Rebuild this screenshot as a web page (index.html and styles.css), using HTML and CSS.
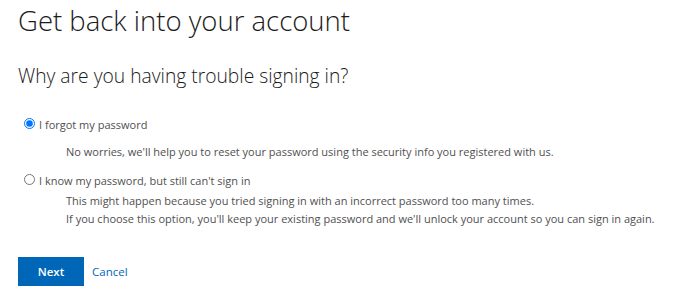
FILE: index.html
```html
<!DOCTYPE html>
<html lang="en">
<head>
<meta charset="utf-8">
<title>Get back into your account</title>
<link rel="stylesheet" href="styles.css">
</head>
<body>
<main class="page">
  <h1 class="title">Get back into your account</h1>
  <h2 class="subtitle">Why are you having trouble signing in?</h2>
  <form class="options">
    <div class="option">
      <label class="option-label"><input type="radio" name="reason" class="radio" checked><span>I forgot my password</span></label>
      <div class="option-desc">
        <p>No worries, we'll help you to reset your password using the security info you registered with us.</p>
      </div>
    </div>
    <div class="option option-second">
      <label class="option-label"><input type="radio" name="reason" class="radio"><span>I know my password, but still can't sign in</span></label>
      <div class="option-desc option-desc-tight">
        <p>This might happen because you tried signing in with an incorrect password too many times.</p>
        <p>If you choose this option, you'll keep your existing password and we'll unlock your account so you can sign in again.</p>
      </div>
    </div>
    <div class="actions">
      <button type="button" class="btn-primary">Next</button>
      <a href="#" class="link">Cancel</a>
    </div>
  </form>
</main>
</body>
</html>
```
FILE: styles.css
```css
html, body {
  margin: 0;
  padding: 0;
  background: #ffffff;
}
body {
  font-family: "Open Sans", "Noto Sans", sans-serif;
  color: #1b1b1b;
}
.page {
  padding: 0 18px;
}
.title {
  margin: 3px 0 0;
  font-size: 27.5px;
  line-height: 36px;
  font-weight: 300;
  color: #1b1b1b;
}
.subtitle {
  margin: 23px 0 0;
  font-size: 19.25px;
  line-height: 28px;
  font-weight: 300;
  color: #1b1b1b;
}
.options {
  margin-top: 25px;
}
.option-label {
  display: flex;
  align-items: flex-start;
  font-size: 11px;
  line-height: 20px;
  color: #505050;
}
.radio {
  margin: 3px 4px 0 6px;
  width: 11px;
  height: 11px;
  accent-color: #0075ff;
}
.option-desc {
  padding-left: 48px;
  margin-top: 8px;
  font-size: 11px;
  line-height: 18px;
  color: #505050;
  white-space: nowrap;
}
.option-desc p {
  margin: 0;
}
.option-second {
  margin-top: 10px;
}
.option-desc-tight {
  margin-top: 1px;
}
.actions {
  display: flex;
  align-items: center;
  gap: 8px;
  margin-top: 29px;
}
.btn-primary {
  width: 66px;
  height: 29px;
  border: none;
  background: #0067b8;
  color: #ffffff;
  font-family: inherit;
  font-size: 11.5px;
  font-weight: 600;
  padding: 0;
}
.link {
  color: #0067b8;
  font-size: 11.5px;
  text-decoration: none;
}
```
